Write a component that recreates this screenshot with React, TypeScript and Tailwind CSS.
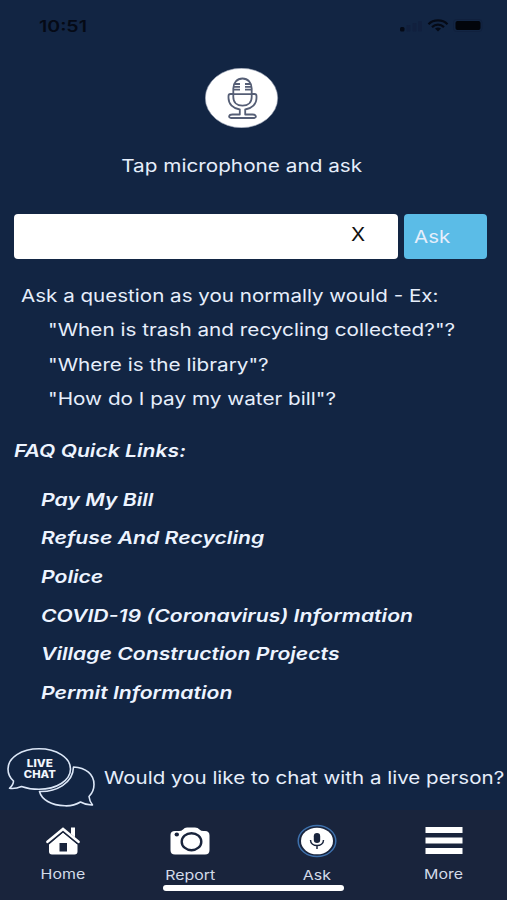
import React from 'react';

const questions = [
  '"When is trash and recycling collected?"?',
  '"Where is the library"?',
  '"How do I pay my water bill"?',
];

const quickLinks = [
  'Pay My Bill',
  'Refuse And Recycling',
  'Police',
  'COVID-19 (Coronavirus) Information',
  'Village Construction Projects',
  'Permit Information',
];

const StatusBar: React.FC = () => (
  <div className="flex h-[52px] items-center justify-between pl-[39px] pr-[22px] text-[#050a16]">
    <span className="origin-left scale-x-[1.22] text-[16px] font-semibold">10:51</span>
    <svg width="88" height="20" viewBox="0 0 88 20">
      {/* Signal */}
      <rect x="3" y="11" width="4.5" height="4.5" rx="1.5" fill="currentColor" />
      <rect x="9.5" y="9" width="4" height="6.5" rx="1" fill="#11203e" />
      <rect x="15.5" y="7" width="4" height="8.5" rx="1" fill="#11203e" />
      <rect x="21" y="5" width="4" height="10.5" rx="1" fill="#11203e" />
      {/* Wifi */}
      <g fill="none" stroke="currentColor" strokeWidth="2.2">
        <path d="M31.5 8.2C36.5 3.2 45.5 3.2 50.5 8.2" />
        <path d="M35 11.1C38.5 7.9 43.5 7.9 47 11.1" />
      </g>
      <path d="M38 12.6Q41 10.6 44 12.6L41 15.5Z" fill="currentColor" />
      {/* Battery */}
      <rect x="56.5" y="3.5" width="28.5" height="12" rx="3" fill="none" stroke="#10203d" />
      <rect x="58.5" y="5" width="25" height="9" rx="2" fill="#02050b" />
    </svg>
  </div>
);

const MicBadge: React.FC = () => (
  <svg width="74" height="60" viewBox="0 0 74 60">
    <ellipse cx="36.5" cy="30" rx="36.2" ry="29.7" fill="#fff" stroke="#9aa3b5" strokeWidth="0.6" />
    <g fill="none" stroke="#555e75" strokeWidth="1.8" strokeLinejoin="round">
      <path d="M28.3 26.2V20.5C28.3 14.8 32 10.5 37.5 10.5S46.7 14.8 46.7 20.5V26.2" />
      <path d="M28.3 26.2V29C28.3 34.5 32 37.7 37.5 37.7S46.7 34.5 46.7 29V26.2Z" />
      <path d="M28.3 26H25.5Q23.5 26 23.5 28V30C23.5 36 28 40.5 34.8 41.5V46.5H27.5C23.3 46.5 23.3 50 26 50H49C51.7 50 51.7 46.5 47.5 46.5H40.2V41.5C47 40.5 51.5 36 51.5 30V28Q51.5 26 49.5 26H46.7" />
      <path d="M29 16H35M29 18.8H35M29 21.6H35M40 16H46M40 18.8H46M40 21.6H46" />
    </g>
  </svg>
);

const ChatBubbles: React.FC = () => (
  <svg width="90" height="62" viewBox="0 0 90 62" className="shrink-0">
    <g fill="none" stroke="#dce7f7" strokeWidth="1.6" strokeLinejoin="round">
      <path d="M2.5 41.3C5 39 6.5 36.5 6.5 34C2.5 30.5 1 26.5 1 22C1 10.5 14.5 1.8 32 1.8S63.5 10.5 63.5 22S49.5 42.3 32 42.3C25 42.3 19.5 41.3 14.5 39.5C10.5 41.2 6.5 41.8 2.5 41.3Z" />
      <path d="M66.5 20C79 20.5 87 27.5 87 37.5C87 42.5 85 46.5 82 49.5C82.3 52.5 83.5 55.5 85.5 58C81 58.2 77 57 73.5 55C68.5 58 63 59 58 58.8C44 58.3 34.5 52.5 32.5 44.5C49 45 66 36.5 66.5 20Z" />
    </g>
    <g fill="#f2f6fd" fontFamily="Inter, sans-serif" fontWeight="800" fontSize="10" textAnchor="middle">
      <text x="32.8" y="19.6" textLength="26" lengthAdjust="spacingAndGlyphs">LIVE</text>
      <text x="32.8" y="30.5" textLength="32" lengthAdjust="spacingAndGlyphs">CHAT</text>
    </g>
  </svg>
);

const HomeIcon = () => (
  <svg width="34" height="28" viewBox="0 0 34 28" fill="#fff">
    <path d="M25 0.5H29V13L25 9.5Z" />
    <path fillRule="evenodd" d="M17 5.5L31.5 17.5V24.5Q31.5 27.5 28.5 27.5H6Q3 27.5 3 24.5V17.5ZM13.5 16V24.5H21V16Z" />
    <path d="M1.5 15.7L17 2.9L32.5 15.7" fill="none" stroke="#19243c" strokeWidth="4" />
    <path d="M1.5 14.8L17 2L32.5 14.8" fill="none" stroke="#fff" strokeWidth="2.6" strokeLinecap="round" />
  </svg>
);

const CameraIcon = () => (
  <svg width="40" height="28" viewBox="0 0 40 28">
    <path d="M5 4H9Q11.5 4 13 2.5Q14.5 0.5 17 0.5H25Q28 0.5 29.5 2.5Q31 4 33.5 4H35Q39.5 4 39.5 8.5V23Q39.5 27.5 35 27.5H5Q0.5 27.5 0.5 23V8Q0.5 4 5 4Z" fill="#fff" />
    <ellipse cx="21.5" cy="14.7" rx="9.8" ry="8.5" fill="#fff" stroke="#19243c" strokeWidth="2.4" />
    <ellipse cx="6.8" cy="7.5" rx="2.2" ry="2" fill="#19243c" />
  </svg>
);

const AskIcon = () => (
  <svg width="40" height="34" viewBox="0 0 40 34">
    <ellipse cx="20" cy="17" rx="18.8" ry="15.6" fill="#19243c" stroke="#3e71ad" strokeWidth="1.5" />
    <ellipse cx="20" cy="17" rx="16" ry="13.3" fill="#fff" />
    <rect x="16.8" y="9" width="6.4" height="10" rx="3.2" fill="#19243c" />
    <path d="M13.5 16C13.5 23.3 26.5 23.3 26.5 16M20 21.5V25" fill="none" stroke="#19243c" strokeWidth="1.5" />
  </svg>
);

const MoreIcon = () => (
  <svg width="38" height="28" viewBox="0 0 38 28" fill="#fff">
    <rect x="0.5" y="0" width="37" height="6" />
    <rect x="0.5" y="10.5" width="37" height="6" />
    <rect x="0.5" y="21" width="37" height="6" />
  </svg>
);

interface NavItemProps {
  label: string;
  low?: boolean;
  children: React.ReactNode;
}

const NavItem: React.FC<NavItemProps> = ({ label, low, children }) => (
  <button className="flex flex-1 flex-col items-center justify-start">
    <span className="flex h-[62px] items-center justify-center">{children}</span>
    <span className={`-mt-[5px] scale-x-[1.18] text-[13.5px] leading-[14px] text-[#d3dbe9] ${low ? 'pt-px' : ''}`}>{label}</span>
  </button>
);

export default function App() {
  return (
    <div className="flex h-[900px] w-[507px] flex-col overflow-hidden bg-[#122543] font-[Inter,sans-serif] text-[17.5px] text-[#e6eefb]">
      <StatusBar />

      {/* Microphone */}
      <div className="flex flex-col items-center pt-4 pr-[24px]">
        <button><MicBadge /></button>
        <div className="mt-[21px] flex h-[35px] items-center">
          <span className="scale-x-[1.185] whitespace-nowrap">Tap microphone and ask</span>
        </div>
      </div>

      {/* Search */}
      <div className="mt-[30px] flex h-[45px] gap-[6px] pl-[14px] pr-5">
        <div className="flex w-[384px] items-center justify-end rounded bg-white pr-[34px] pb-[5px] text-[#111111]">
          <span className="scale-x-[1.15] text-[18px]">X</span>
        </div>
        <button className="flex flex-1 items-center rounded bg-[#5bbce7] pt-[2px] pl-[10px]">
          <span className="origin-left scale-x-[1.17]">Ask</span>
        </button>
      </div>

      {/* Examples */}
      <div className="mt-[19.5px] flex flex-col">
        <div className="flex h-[34.5px] items-center pl-[21px]">
          <span className="origin-left scale-x-[1.176] whitespace-nowrap">Ask a question as you normally would - Ex:</span>
        </div>
        {questions.map((q) => (
          <div key={q} className="flex h-[34.5px] items-center pl-[48px]">
            <span className="origin-left scale-x-[1.184] whitespace-nowrap">{q}</span>
          </div>
        ))}
      </div>

      {/* Quick links */}
      <div className="mt-[18px] flex flex-col font-semibold italic text-[#edf4ff]">
        <div className="flex h-[34px] items-center pl-[14px]">
          <span className="origin-left scale-x-[1.208] whitespace-nowrap">FAQ Quick Links:</span>
        </div>
        <ul className="mt-[12px]">
          {quickLinks.map((link) => (
            <li key={link} className="flex h-[38.65px] items-center pl-[41px]">
              <span className="origin-left scale-x-[1.21] whitespace-nowrap">{link}</span>
            </li>
          ))}
        </ul>
      </div>

      {/* Live chat */}
      <div className="mt-auto flex h-[66px] shrink-0 items-center pt-[2px] pl-[7px]">
        <ChatBubbles />
        <span className="ml-[6.5px] origin-left scale-x-[1.174] whitespace-nowrap">Would you like to chat with a live person?</span>
      </div>

      {/* Bottom navigation */}
      <nav className="relative flex h-[90px] shrink-0 bg-[#19243c]">
        <NavItem label="Home"><HomeIcon /></NavItem>
        <NavItem label="Report" low><CameraIcon /></NavItem>
        <NavItem label="Ask" low><AskIcon /></NavItem>
        <NavItem label="More"><MoreIcon /></NavItem>
        <div className="absolute bottom-[9px] left-[163px] h-[6px] w-[181px] rounded-full bg-white" />
      </nav>
    </div>
  );
}
